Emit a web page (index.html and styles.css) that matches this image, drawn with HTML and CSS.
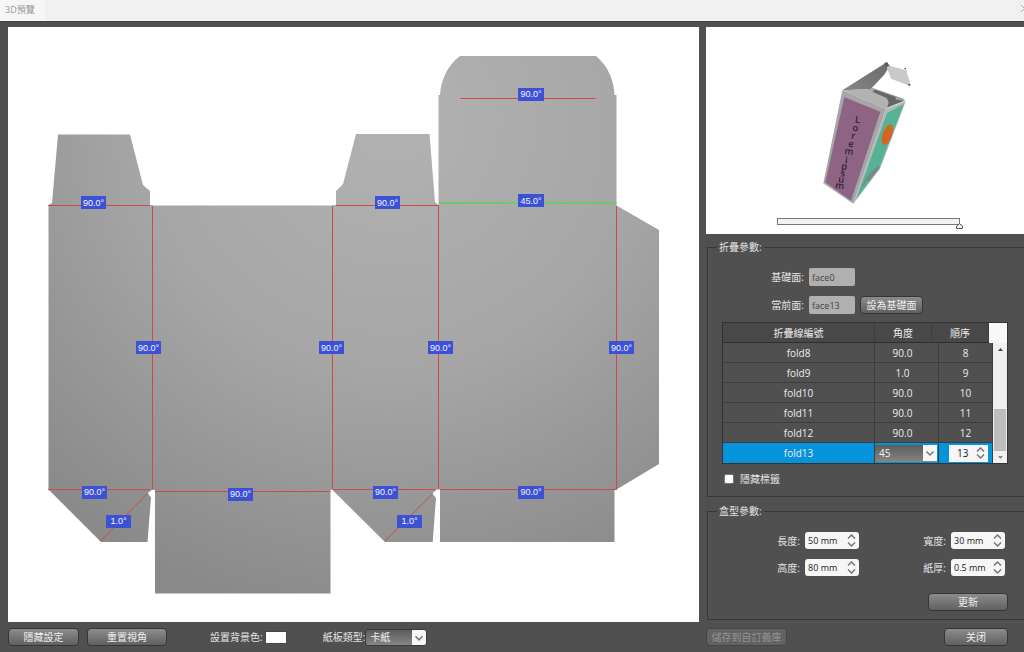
FILE: index.html
```html
<!DOCTYPE html>
<html lang="zh-Hant">
<head>
<meta charset="utf-8">
<title>3D預覽</title>
<meta name="viewport" content="width=device-width, initial-scale=1">
<link rel="stylesheet" href="styles.css">
</head>
<body>
<header class="titlebar">
  <h1 class="title">3D預覽</h1>
  <button class="close" aria-label="關閉視窗"><svg width="3" height="9" viewBox="0 0 3 9"><path d="M0 1l7 7M0 8l7-7" stroke="#aaa" fill="none"/></svg></button>
</header>
<main class="workspace">
  <section class="canvas" aria-label="展開圖">
    <svg class="dieline" viewBox="8 27 691 595">
      <defs>
        <radialGradient id="board" gradientUnits="userSpaceOnUse" cx="390" cy="120" r="500">
          <stop offset="0" stop-color="#b2b2b2"/><stop offset=".5" stop-color="#a6a6a6"/><stop offset="1" stop-color="#8a8a8a"/>
        </radialGradient>
      </defs>
      <g fill="url(#board)">
        <path d="M58 134.500H130L143 185l7 6V205H152.500V205.500H332.500V205H336V191l7-7L356 134H429.500L435 202l3.500 3V95H440C441 79 448 65 460 56H596C608 66 614 80 614.500 95H616.500V205.500L659 230V464L616.500 489.500H614.500V542H440V489.500H436.500L432.500 493.500L436 498L432.700 542H385L332.500 490H330.500V593.500H155V490H152L147.700 493L151 497.500L147.500 542H101L48.500 489.500V205L52 203Z"/>
      </g>
      <g stroke="#d04848" fill="none">
        <path d="M48 205.500H150M336 205.500H439M460.500 98.500H595.500M152.500 206V489M332.500 206V489M438.500 206V489M616.500 206V489M48 489.500H150M155 491.500H330.500M333 489.500H436M440 489.500H617M100.500 541L147.500 493.500M385 541L432.500 494"/>
      </g>
      <path d="M439 203H616.500" stroke="#56d456" stroke-width="1.500"/>
      <g fill="#3d51d5">
        <path d="M81 196h25v13h-25zM375 196h25v13h-25zM518 88h26v13h-26zM518 194h26v13h-26zM136 341h25v13h-25zM319 341h25v13h-25zM428 341h25v13h-25zM609 341h25v13h-25zM82 486h25v13h-25zM228 488h25v13h-25zM373 486h25v13h-25zM518 486h26v13h-26zM106 515h25v13h-25zM397 515h25v13h-25z"/>
      </g>
      <g class="angles">
        <text x="93.500" y="206">90.0°</text><text x="387.500" y="206">90.0°</text>
        <text x="531" y="97">90.0°</text><text x="531" y="204">45.0°</text>
        <text x="148.500" y="351">90.0°</text><text x="331.500" y="351">90.0°</text>
        <text x="440.500" y="351">90.0°</text><text x="621.500" y="351">90.0°</text>
        <text x="94.500" y="495">90.0°</text><text x="240.500" y="497">90.0°</text>
        <text x="385.500" y="495">90.0°</text><text x="531" y="495">90.0°</text>
        <text x="118.500" y="524">1.0°</text><text x="409.500" y="524">1.0°</text>
      </g>
    </svg>
  </section>
  <aside class="side">
    <section class="preview" aria-label="立體預覽">
      <svg class="box3d" viewBox="706 27 318 187">
        <defs><linearGradient id="lid" x1="0" y1="1" x2="1" y2="0"><stop offset="0" stop-color="#858585"/><stop offset="1" stop-color="#6a6a6a"/></linearGradient></defs>
        <g transform="translate(800 40) scale(.33333)">
          <path d="M127 151L258 68L270 77L252 105L212 148Z" fill="url(#lid)"/>
          <path d="M252 70l10-4 6 12-8 6z" fill="#5c5c5c"/>
          <path d="M260 81L269 77L319 91L331 132L324 136L273 116Z" fill="#c9c9c9"/>
          <path d="M127 151L212 147L316 179L258 207Z" fill="#b2b2b2"/>
          <path d="M205 148l14-4 94 33-12 7z" fill="#a0a0a0"/>
          <path d="M217 155l8-6 62 22 0 8 27 3-52 20 4-15-6-13z" fill="#666"/>
          <path d="M127 151L258 207L160 491L70 430Z" fill="#a7a5a7"/>
          <path d="M133 172L241 215L153 482L76 427Z" fill="#8d6484"/>
          <path d="M258 207L318 182L240 387L160 491Z" fill="#b2bbb7"/>
          <path d="M261 219L312 191L238 383L169 476Z" fill="#55b294"/>
          <path d="M195 419l18-22 23-22 3 8-31 39-7-2-21 33z" fill="#738b8d"/>
          <ellipse cx="262" cy="284" rx="14" ry="32" transform="rotate(20 262 284)" fill="#d66520"/>
          <path d="M312 84h6l-1 6zM325 132h6v5h-6z" fill="#555"/>
          <text class="brand" x="164 157 153 144 133 134 123 121 114 105" y="248 272 296 320 342 370 388 409 427 445" rotate="6">Loremipsum</text>
        </g>
      </svg>
      <input class="fold-range" type="range" min="0" max="100" value="100" aria-label="折疊程度">
    </section>

    <fieldset class="group fold-group">
      <legend>折疊參數:</legend>
      <div class="face-row">
        <label for="base">基礎面:</label>
        <input class="face" id="base" value="face0" readonly>
      </div>
      <div class="face-row">
        <label for="current">當前面:</label>
        <input class="face" id="current" value="face13" readonly>
        <button class="btn btn-face">設為基礎面</button>
      </div>
      <table class="folds">
        <colgroup><col><col class="c-angle"><col class="c-shift"><col class="c-order"><col class="c-edge"><col class="c-scroll"></colgroup>
        <thead><tr><th>折疊線編號</th><th>角度</th><th colspan="2">順序</th><td class="corner" colspan="2"></td></tr></thead>
        <tbody>
          <tr><td>fold8</td><td colspan="2" class="angle">90.0</td><td colspan="2">8</td>
            <td rowspan="6" class="scroll-cell"><div class="scrollbar">
              <button aria-label="向上捲動"><svg width="5" height="3" viewBox="0 0 5 3"><path d="M0 3L2.500 0L5 3z" fill="#444"/></svg></button>
              <div class="thumb"></div>
              <button aria-label="向下捲動"><svg width="5" height="3" viewBox="0 0 5 3"><path d="M0 0L2.500 3L5 0z" fill="#888"/></svg></button>
            </div></td></tr>
          <tr><td>fold9</td><td colspan="2" class="angle">1.0</td><td colspan="2">9</td></tr>
          <tr><td>fold10</td><td colspan="2" class="angle">90.0</td><td colspan="2">10</td></tr>
          <tr><td>fold11</td><td colspan="2" class="angle">90.0</td><td colspan="2">11</td></tr>
          <tr><td>fold12</td><td colspan="2" class="angle">90.0</td><td colspan="2">12</td></tr>
          <tr class="selected"><td>fold13</td>
            <td colspan="2"><select class="combo combo-cell" aria-label="角度"><option>45</option><option>90</option></select></td>
            <td colspan="2" class="order-cell"><span class="spin spin-cell"><input value="13" aria-label="順序"><span class="steps"><button aria-label="增加"><svg viewBox="0 0 9 5"><path d="M1 4.500L4.500 1L8 4.500"/></svg></button><button aria-label="減少"><svg viewBox="0 0 9 5"><path d="M1 .5L4.500 4L8 .5"/></svg></button></span></span></td></tr>
        </tbody>
      </table>
      <div class="hide-row"><input type="checkbox" id="hide"><label for="hide">隱藏標籤</label></div>
    </fieldset>

    <fieldset class="group box-group">
      <legend>盒型參數:</legend>
      <div class="dims">
        <label for="len">長度:</label>
        <span class="spin"><input id="len" value="50 mm"><span class="steps"><button aria-label="增加長度"><svg viewBox="0 0 9 5"><path d="M1 4.500L4.500 1L8 4.500"/></svg></button><button aria-label="減少長度"><svg viewBox="0 0 9 5"><path d="M1 .5L4.500 4L8 .5"/></svg></button></span></span>
        <label for="wid">寬度:</label>
        <span class="spin"><input id="wid" value="30 mm"><span class="steps"><button aria-label="增加寬度"><svg viewBox="0 0 9 5"><path d="M1 4.500L4.500 1L8 4.500"/></svg></button><button aria-label="減少寬度"><svg viewBox="0 0 9 5"><path d="M1 .5L4.500 4L8 .5"/></svg></button></span></span>
        <label for="hei">高度:</label>
        <span class="spin"><input id="hei" value="80 mm"><span class="steps"><button aria-label="增加高度"><svg viewBox="0 0 9 5"><path d="M1 4.500L4.500 1L8 4.500"/></svg></button><button aria-label="減少高度"><svg viewBox="0 0 9 5"><path d="M1 .5L4.500 4L8 .5"/></svg></button></span></span>
        <label for="thick">紙厚:</label>
        <span class="spin"><input id="thick" value="0.5 mm"><span class="steps"><button aria-label="增加紙厚"><svg viewBox="0 0 9 5"><path d="M1 4.500L4.500 1L8 4.500"/></svg></button><button aria-label="減少紙厚"><svg viewBox="0 0 9 5"><path d="M1 .5L4.500 4L8 .5"/></svg></button></span></span>
      </div>
      <button class="btn btn-update">更新</button>
    </fieldset>
  </aside>
  <footer class="bar bar-left">
    <button class="btn btn-hide">隱藏設定</button>
    <button class="btn btn-reset">重置視角</button>
    <div class="field field-color"><label for="bg">設置背景色:</label><button class="swatch" id="bg"></button></div>
    <div class="field"><label for="paper">紙板類型:</label><select class="combo" id="paper"><option>卡紙</option></select></div>
  </footer>
  <footer class="bar bar-right">
    <button class="btn btn-save" disabled>儲存到自訂義庫</button>
    <button class="btn btn-close">关闭</button>
  </footer>
</main>
</body>
</html>
```
FILE: styles.css
```css
* { box-sizing: border-box; }

body {
  margin: 0;
  min-height: 100vh;
  display: flex;
  flex-direction: column;
  overflow-x: hidden;
  background: #505050;
  color: #e4e4e4;
  font: 10px/14px "Open Sans", "Noto Sans CJK TC", sans-serif;
}

button, input, select { font: inherit; color: inherit; margin: 0; padding: 0; border: 0; }
svg { display: block; }

.titlebar {
  display: flex;
  align-items: center;
  justify-content: space-between;
  height: 21px;
  background: #f1f1f1;
  color: #999;
}
.title {
  margin: 0;
  padding: 0 10px 2px 5px;
  background: #f6f6f6;
  font-size: 9px;
  line-height: 19px;
  font-weight: 400;
}
.close { background: none; padding-bottom: 4px; }

.workspace {
  flex: 1;
  display: grid;
  grid-template-columns: minmax(0, 1fr) 319px;
  grid-template-rows: 1fr 30px;
  column-gap: 6px;
  padding: 5px 0 0 8px;
  border-top: 1px solid #444;
}

.canvas { background: #fff; display: flex; }
.dieline { width: 100%; height: auto; }
.angles text {
  fill: #f2f4ff;
  font: 9px "Liberation Sans", sans-serif;
  text-anchor: middle;
}

.side { display: flex; flex-direction: column; padding-bottom: 2px; }
.preview {
  background: #fff;
  height: 207px;
  display: flex;
  flex-direction: column;
  margin: 0 0 6px 1px;
}
.box3d { width: 100%; height: 187px; }
.brand { font: 600 28px "Open Sans", sans-serif; fill: #33203a; }

.fold-range {
  appearance: none;
  background: none;
  width: 183px;
  height: 12px;
  margin: 1px 0 0 71px;
}
.fold-range::-webkit-slider-runnable-track {
  height: 7px;
  background: #f2f2f2;
  border: 1px solid #777;
}
.fold-range::-webkit-slider-thumb {
  appearance: none;
  width: 7px;
  height: 6px;
  margin-top: 4px;
  transform: translate(4px);
  background: url("data:image/svg+xml,%3Csvg xmlns='http://www.w3.org/2000/svg' viewBox='0 0 7 6'%3E%3Cpath d='M.5 5.500V3L3.500.7L6.500 3V5.500z' fill='%23eee' stroke='%23555'/%3E%3C/svg%3E");
}

.group {
  min-width: 0;
  margin: 0 0 0 2px;
  border: 1px solid #373737;
  border-right: 0;
  padding: 0 16px 0 14px;
}
.group legend { margin-left: -5px; padding: 0 2px; line-height: 14px; }

.fold-group { padding-top: 14px; padding-bottom: 10px; }
.face-row {
  display: grid;
  grid-template-columns: 82px 46px 63px;
  align-items: center;
  gap: 5px;
  height: 18px;
  margin-bottom: 10px;
}
.face-row label, .dims label { text-align: right; }
.face {
  width: 100%;
  height: 18px;
  border-radius: 2px;
  padding: 0 3px;
  background: #b0b0b0;
  color: #444;
  font-size: 9px;
}

.btn {
  height: 18px;
  border: 1px solid #353535;
  border-radius: 4px;
  background: linear-gradient(#8c8c8c, #606060);
  color: #f0f0f0;
  line-height: 14px;
  white-space: nowrap;
}
.btn:disabled { background: #626262; border-color: #454545; color: #929292; }

.folds {
  width: 100%;
  margin-top: -2px;
  table-layout: fixed;
  border-collapse: separate;
  border-spacing: 0;
  border: 1px solid #333;
  color: #ededed;
  text-align: center;
}
.c-angle { width: 57px; }
.c-shift { width: 7px; }
.c-order { width: 50px; }
.c-edge { width: 4px; }
.c-scroll { width: 14px; }
.folds th, .folds td {
  height: 20px;
  padding: 0;
  font-weight: 400;
  line-height: 16px;
  border-right: 1px solid #3d3d3d;
  border-bottom: 1px solid #3d3d3d;
}
.folds th { background: #484848; border-bottom-color: #2e2e2e; }
.folds .corner { background: #f8f8f8; border: 0; }
.folds .angle { padding-right: 8px; }
.folds .scroll-cell { padding: 0; border: 0; vertical-align: top; }
.scrollbar {
  height: 120px;
  display: flex;
  flex-direction: column;
  background: #f0f0f0;
}
.scrollbar button {
  height: 12px;
  display: grid;
  place-items: center;
  background: none;
}
.thumb { height: 42px; margin: auto 1px 0; background: #bdbdbd; }
.folds .selected td { background: #0593dc; border-bottom: 0; }
.folds .order-cell { padding: 0 4px 0 10px; }

.combo {
  appearance: none;
  width: 62px;
  height: 17px;
  border: 1px solid #3a3a3a;
  border-radius: 3px;
  padding: 0 16px 0 4px;
  line-height: 15px;
  color: #f4f4f4;
  background:
    url("data:image/svg+xml,%3Csvg xmlns='http://www.w3.org/2000/svg' viewBox='0 0 14 16'%3E%3Cpath d='M0 0h14v16H0z' fill='%23f6f6f6'/%3E%3Cpath d='M3.500 6.500L7 10l3.500-3.500' fill='none' stroke='%23777' stroke-width='1.500'/%3E%3C/svg%3E") right / 14px 16px no-repeat,
    linear-gradient(#5c5c5c, #858585);
}
.combo-cell { display: block; border: 0; border-radius: 0; }

.spin {
  display: flex;
  width: 54px;
  height: 17px;
  border-radius: 3px;
  background: #f6f6f6;
  color: #222;
}
.spin input {
  flex: 1;
  min-width: 0;
  padding-left: 3px;
  background: none;
  font-size: 9px;
}
.steps { display: flex; flex-direction: column; justify-content: space-evenly; padding-right: 3px; }
.steps button { background: none; }
.steps svg { width: 9px; height: 5px; fill: none; stroke: #777; stroke-width: 1.500; }
.spin-cell { width: 100%; border-radius: 0; }
.spin-cell input { padding-left: 8px; font-size: 10px; }

.hide-row { display: flex; align-items: center; gap: 6px; height: 14px; margin: 8px 0 0 2px; }
.hide-row input {
  appearance: none;
  width: 10px;
  height: 10px;
  background: #fff;
  border: 1px solid #777;
  border-radius: 2px;
}
.hide-row input:checked { background: #0593dc; }

.box-group { margin-top: 7px; padding-top: 14px; padding-bottom: 8px; }
.dims {
  display: grid;
  grid-template-columns: 78px 54px 1fr 54px;
  gap: 10px 5px;
  align-items: center;
  padding-right: 3px;
}
.btn-update { display: block; width: 80px; margin: 17px 0 0 auto; }

.bar { display: flex; align-items: center; }
.btn-hide { width: 71px; }
.btn-reset { width: 80px; margin-left: 8px; }
.field { display: flex; align-items: center; }
.field-color { gap: 2px; margin: 0 36px 0 43px; }
.swatch { width: 22px; height: 13px; background: #fff; border: 1px solid #444; }
.bar-right { justify-content: space-between; padding: 0 16px 0 1px; }
.btn-save { width: 81px; }
.btn-close { width: 64px; }
```
